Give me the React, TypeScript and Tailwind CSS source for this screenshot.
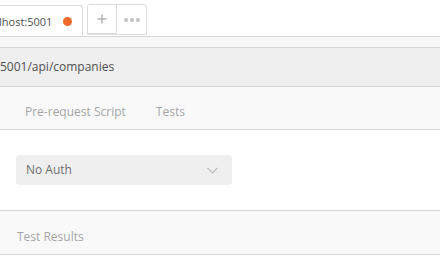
import React from 'react';

const font = { fontFamily: '"Open Sans", "Noto Sans", sans-serif' };

const App = () => {
  return (
    <div className="w-[440px] h-[260px] overflow-hidden bg-white font-['Open_Sans',sans-serif]">
      {/* Tab bar */}
      <div className="h-[37px] flex items-end border-b border-[#d6d6d6]">
        <div className="h-[31px] w-[83px] flex items-center justify-between pl-0 pr-[10px] bg-white border-t border-r border-[#dcdcdc] rounded-tr-[3px]">
          <span className="text-[11px] text-[#505050] leading-none -ml-px">lhost:5001</span>
          <span className="w-[9px] h-[9px] rounded-full bg-[#f26b2d]"></span>
        </div>
        <div className="ml-[4px] mb-[1px] h-[31px] flex border border-[#dcdcdc] rounded-t-[3px]">
          <div className="w-[29px] flex items-center justify-center border-r border-[#dcdcdc] border-b bg-white">
            <svg width="10" height="10" viewBox="0 0 10 10">
              <path d="M5 0.5v9M0.5 5h9" stroke="#b4b4b4" strokeWidth="1.5" />
            </svg>
          </div>
          <div className="w-[29px] flex items-center justify-center gap-[2px]">
            <span className="w-[4px] h-[4px] rounded-full bg-[#c4c4c4]"></span>
            <span className="w-[4px] h-[4px] rounded-full bg-[#c4c4c4]"></span>
            <span className="w-[4px] h-[4px] rounded-full bg-[#c4c4c4]"></span>
          </div>
        </div>
      </div>

      {/* Thin strip */}
      <div className="h-[11px] bg-[#f8f8f8] border-b border-[#d6d6d6]"></div>

      {/* URL bar */}
      <div className="h-[39px] bg-[#efefef] border-b border-[#d6d6d6] flex items-center">
        <span className="text-[12px] text-[#505050]" style={font}>5001/api/companies</span>
      </div>

      {/* Request tabs */}
      <div className="h-[43px] bg-[#f9f9f9] border-b border-[#d6d6d6] flex items-center gap-[30px] pl-[25px] pt-[7px]">
        <span className="text-[12px] text-[#a6a6a6]" style={font}>Pre-request Script</span>
        <span className="text-[12px] text-[#a6a6a6]" style={font}>Tests</span>
      </div>

      {/* Auth section */}
      <div className="h-[80px] pl-[16px] pt-[25px]">
        <div className="w-[216px] h-[30px] rounded-[3px] bg-[#efefef] flex items-center justify-between pl-[10px] pr-[14px]">
          <span className="text-[12px] text-[#707070]" style={font}>No Auth</span>
          <svg width="11" height="7" viewBox="0 0 11 7">
            <path d="M0.5 0.8l5 5 5-5" fill="none" stroke="#b8b8b8" strokeWidth="1.2" />
          </svg>
        </div>
      </div>

      {/* Test results */}
      <div className="h-[45px] bg-[#f9f9f9] border-t border-b border-[#d6d6d6] flex items-center pl-[17px] pt-[8px]">
        <span className="text-[12px] text-[#a6a6a6]" style={font}>Test Results</span>
      </div>
    </div>
  );
};

export default App;
